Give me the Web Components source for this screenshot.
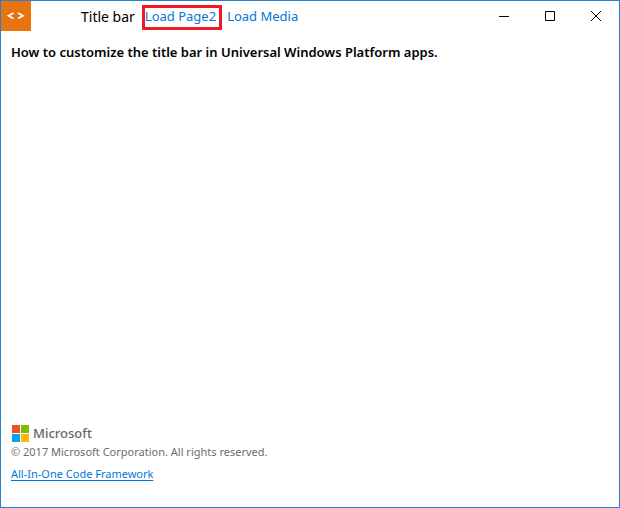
<!DOCTYPE html>
<html lang="en">
<head>
<meta charset="utf-8">
<title>Title bar</title>
<style>
html, body { height: 100%; margin: 0; }
body { font-family: "Noto Sans", "Open Sans", sans-serif; color: #000; background: #fff; }
</style>
</head>
<body>
<app-window>
  <title-bar slot="bar" label="Title bar">
    <bar-action marked>Load Page2</bar-action>
    <bar-action>Load Media</bar-action>
  </title-bar>
  <page-heading>How to customize the title bar in Universal Windows Platform apps.</page-heading>
  <page-footer slot="footer" href="#framework" link="All-In-One Code Framework">© 2017 Microsoft Corporation. All rights reserved.</page-footer>
</app-window>
<script>
class Base extends HTMLElement {
  connectedCallback() {
    if (this.shadowRoot) return;
    this.attachShadow({ mode: "open" }).innerHTML = this.view();
  }
}

customElements.define("app-window", class extends Base {
  view() {
    return `<style>
      :host { display: flex; flex-direction: column; box-sizing: border-box; min-height: 100%; border: 1px solid #2482d0; background: #fff; }
      main { flex: 1; padding: 11px 10px; }
    </style>
    <slot name="bar"></slot>
    <main><slot></slot></main>
    <slot name="footer"></slot>`;
  }
});

customElements.define("title-bar", class extends Base {
  view() {
    return `<style>
      :host { display: flex; align-items: center; height: 30px; }
      .label { margin-left: 50px; padding-top: 2px; font-size: 14px; line-height: 20px; white-space: nowrap; }
      .actions { display: flex; flex: 1; align-self: flex-end; margin-left: 7px; padding-bottom: 1px; gap: 2px; }
    </style>
    <app-logo></app-logo>
    <span class="label">${this.getAttribute("label")}</span>
    <div class="actions"><slot></slot></div>
    <window-controls></window-controls>`;
  }
});

customElements.define("app-logo", class extends Base {
  view() {
    return `<style>
      :host { display: block; width: 30px; height: 30px; background: #e8730f; }
      svg { display: block; }
    </style>
    <svg width="30" height="30" viewBox="0 0 30 30" fill="none" stroke="#fff" stroke-width="1.7" aria-hidden="true">
      <path d="M12.5 12 7.5 14.7 12.5 17.4M17 12l5 2.7-5 2.7"/>
    </svg>`;
  }
});

customElements.define("bar-action", class extends Base {
  view() {
    return `<style>
      :host { display: block; }
      button { display: block; box-sizing: border-box; margin: 0; padding: 0 3px 3px; height: 25px; border: 0 solid #ed1c24; background: none; font: inherit; font-size: 13px; line-height: 16px; color: #0078d7; white-space: nowrap; }
      :host([marked]) button { padding: 0 3px 3px 0; border-width: 3px; }
    </style>
    <button type="button"><slot></slot></button>`;
  }
});

customElements.define("window-controls", class extends Base {
  view() {
    return `<style>
      :host { display: flex; }
      button { display: grid; place-items: center; width: 46px; height: 30px; margin: 0; padding: 0; border: 0; background: none; }
      svg { display: block; }
    </style>
    <button type="button" aria-label="Minimize"><svg width="10" height="10" fill="none" stroke="#000"><path d="M0 5.5h10"/></svg></button>
    <button type="button" aria-label="Maximize"><svg width="10" height="10" fill="none" stroke="#000"><path d="M.5.5h9v9h-9z"/></svg></button>
    <button type="button" aria-label="Close"><svg width="10" height="10" fill="none" stroke="#000"><path d="M0 0l10 10M10 0 0 10"/></svg></button>`;
  }
});

customElements.define("page-heading", class extends Base {
  view() {
    return `<style>
      :host { display: block; }
      h1 { margin: 0; font-size: 13px; line-height: 20px; font-weight: 600; }
    </style>
    <h1><slot></slot></h1>`;
  }
});

customElements.define("microsoft-logo", class extends Base {
  view() {
    return `<style>
      :host { display: flex; align-items: center; gap: 4px; padding-left: 1px; font-size: 13px; line-height: 18px; font-weight: 500; color: #666; }
      svg { display: block; }
    </style>
    <svg width="17" height="17" aria-hidden="true">
      <path fill="#f25022" d="M0 0h8v8H0z"/><path fill="#7fba00" d="M9 0h8v8H9z"/>
      <path fill="#00a4ef" d="M0 9h8v8H0z"/><path fill="#ffb900" d="M9 9h8v8H9z"/>
    </svg><span>Microsoft</span>`;
  }
});

customElements.define("page-footer", class extends Base {
  view() {
    return `<style>
      :host { display: block; padding: 0 10px 24px; font-size: 11px; }
      p { margin: 1px 0 0; line-height: 18px; color: #6d6d6d; }
      nav { margin-top: 4px; line-height: 18px; }
      a { color: #0078d7; text-underline-offset: 2px; }
    </style>
    <microsoft-logo></microsoft-logo>
    <p><slot></slot></p>
    <nav><a href="${this.getAttribute("href")}">${this.getAttribute("link")}</a></nav>`;
  }
});
</script>
</body>
</html>
